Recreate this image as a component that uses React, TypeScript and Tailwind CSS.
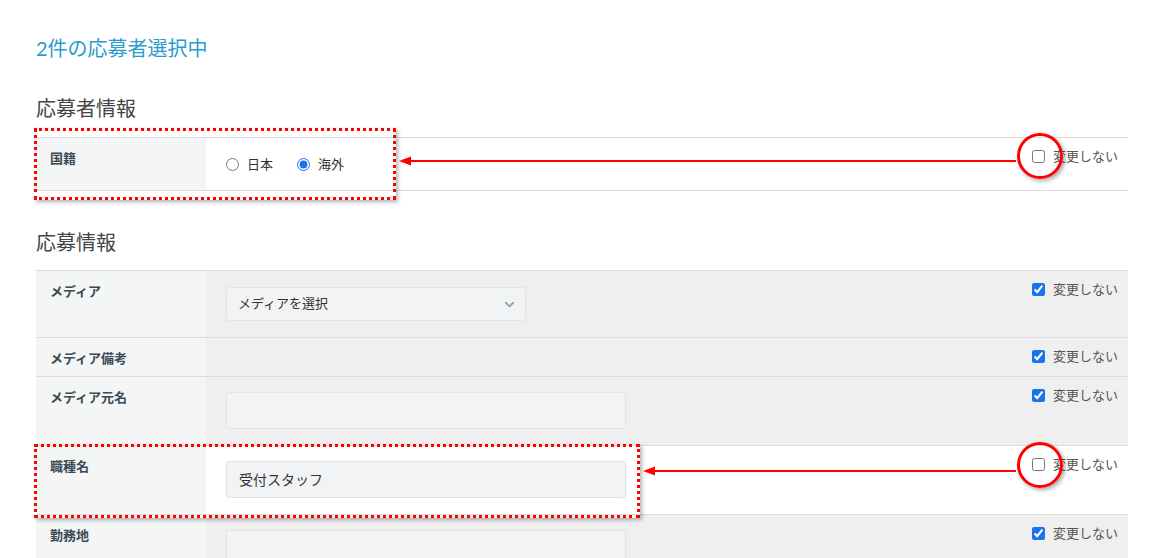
import React from "react";
import { ChevronDown } from "lucide-react";

const font = { fontFamily: '"Lato", "Noto Sans CJK JP", sans-serif' };

function KeepBox({ checked }: { checked: boolean }) {
  return (
    <label className="flex items-center gap-[8px] text-[13px] text-[#555]">
      <input
        type="checkbox"
        readOnly
        checked={checked}
        className="m-0 h-[13px] w-[13px] accent-[#1a73e8]"
      />
      変更しない
    </label>
  );
}

function Row({
  label,
  keep,
  children,
}: {
  label: string;
  keep: boolean;
  children?: React.ReactNode;
}) {
  return (
    <div className="flex border-b border-[#dcdcdc]">
      <div className="w-[170px] shrink-0 bg-[#f4f5f5] pl-[14px] pt-[10px] text-[13px] font-bold leading-5 text-[#3b4b56]">
        {label}
      </div>
      <div
        className={`flex flex-1 justify-between pr-[10px] pl-[20px] ${
          keep ? "bg-[#efefef]" : "bg-white"
        }`}
      >
        <div className="flex-1">{children}</div>
        <div className="pt-[9px]">
          <KeepBox checked={keep} />
        </div>
      </div>
    </div>
  );
}

function TextBox({ value = "" }: { value?: string }) {
  return (
    <div className="flex h-[37px] w-[400px] items-center rounded-[3px] border border-[#e1e3e6] bg-[#f2f3f5] px-[12px] text-[14px] text-[#333]">
      {value}
    </div>
  );
}

function Arrow({ left, top, width }: { left: number; top: number; width: number }) {
  return (
    <svg
      className="absolute"
      style={{ left, top }}
      width={width}
      height={12}
      viewBox={`0 0 ${width} 12`}
    >
      <line x1={10} y1={6} x2={width} y2={6} stroke="#f00" strokeWidth={2} />
      <polygon points="0,6 12,1.5 12,10.5" fill="#f00" />
    </svg>
  );
}

export default function App() {
  return (
    <div className="relative min-h-[558px] bg-white pt-[36px] pl-[36px] pr-[42px]" style={font}>
      <h1 className="text-[20px] leading-6 text-[#2a9bcc]">2件の応募者選択中</h1>

      <h2 className="mt-[34px] mb-[15px] text-[20px] leading-7 text-[#444]">応募者情報</h2>
      <div className="border-t border-[#dcdcdc]">
        <Row label="国籍" keep={false}>
          <div className="flex items-center gap-[24px] pt-[16px] pb-[16px] text-[13px] leading-5 text-[#333]">
            <label className="flex items-center gap-[8px]">
              <input type="radio" name="nat" readOnly className="m-0 h-[13px] w-[13px] accent-[#1a73e8]" />
              日本
            </label>
            <label className="flex items-center gap-[8px]">
              <input type="radio" name="nat" readOnly checked className="m-0 h-[13px] w-[13px] accent-[#1a73e8]" />
              海外
            </label>
          </div>
        </Row>
      </div>

      <h2 className="mt-[37px] mb-[14px] text-[20px] leading-7 text-[#444]">応募情報</h2>
      <div className="border-t border-[#dcdcdc]">
        <Row label="メディア" keep>
          <div className="py-[16px]">
            <div className="flex h-[34px] w-[300px] items-center justify-between rounded-[3px] border border-[#e1e3e6] bg-[#f2f3f5] pl-[11px] pr-[8px] text-[13px] text-[#333]">
              メディアを選択
              <ChevronDown size={15} strokeWidth={3} color="#7fa9b3" />
            </div>
          </div>
        </Row>
        <Row label="メディア備考" keep>
          <div className="h-[38px]" />
        </Row>
        <Row label="メディア元名" keep>
          <div className="pt-[15px] pb-[16px]">
            <TextBox />
          </div>
        </Row>
        <Row label="職種名" keep={false}>
          <div className="pt-[15px] pb-[16px]">
            <TextBox value="受付スタッフ" />
          </div>
        </Row>
        <Row label="勤務地" keep>
          <div className="pt-[15px] pb-[16px]">
            <TextBox />
          </div>
        </Row>
      </div>

      {/* annotations */}
      <div className="pointer-events-none absolute left-[34px] top-[128px] h-[72px] w-[362px] border-[3px] border-dotted border-[#f00] shadow-[2px_2px_4px_rgba(0,0,0,0.3)]" />
      <div className="pointer-events-none absolute left-[34px] top-[444px] h-[74px] w-[606px] border-[3px] border-dotted border-[#f00] shadow-[2px_2px_4px_rgba(0,0,0,0.3)]" />
      <Arrow left={399} top={155} width={617} />
      <Arrow left={643} top={465} width={373} />
      <div className="pointer-events-none absolute left-[1017px] top-[133px] h-[46px] w-[46px] rounded-full border-[3px] border-[#f00] shadow-[2px_2px_4px_rgba(0,0,0,0.35)]" />
      <div className="pointer-events-none absolute left-[1017px] top-[442px] h-[46px] w-[46px] rounded-full border-[3px] border-[#f00] shadow-[2px_2px_4px_rgba(0,0,0,0.35)]" />
    </div>
  );
}
